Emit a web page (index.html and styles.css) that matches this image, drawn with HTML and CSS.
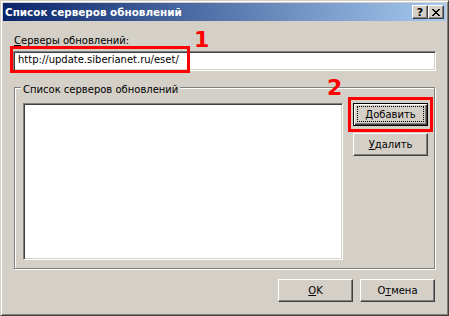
FILE: index.html
```html
<!DOCTYPE html>
<html>
<head>
  <title>Список серверов обновлений</title>
  <link rel="stylesheet" href="styles.css">
</head>
<body>
  <div class="window">
    <div class="titlebar">
      <span class="title">Список серверов обновлений</span>
      <div class="caption-buttons">
        <span class="cap-btn">?</span>
        <span class="cap-btn">
          <svg width="8" height="7" viewBox="0 0 8 7" shape-rendering="crispEdges">
            <path d="M0 0h2v1h-2z M6 0h2v1h-2z M1 1h2v1h-2z M5 1h2v1h-2z M2 2h4v1h-4z M3 3h2v1h-2z M2 4h4v1h-4z M1 5h2v1h-2z M5 5h2v1h-2z M0 6h2v1h-2z M6 6h2v1h-2z" fill="#000"/>
          </svg>
        </span>
      </div>
    </div>

    <div class="content">
      <div class="field-label"><u>С</u>ерверы обновлений:</div>
      <div class="edit">http://update.siberianet.ru/eset/</div>

      <div class="group">
        <span class="group-title">Список серверов обновлений</span>
        <div class="listbox"></div>
        <div class="group-buttons">
          <button class="btn default"><span class="focus"><u>Д</u>обавить</span></button>
          <button class="btn"><u>У</u>далить</button>
        </div>
      </div>

      <div class="footer">
        <button class="btn"><u>O</u>K</button>
        <button class="btn">О<u>т</u>мена</button>
      </div>
    </div>

    <!-- red annotations -->
    <div class="mark-box mark-box-1"></div>
    <div class="mark-box mark-box-2"></div>
    <span class="mark-num mark-num-1">1</span>
    <span class="mark-num mark-num-2">2</span>
  </div>
</body>
</html>
```

FILE: styles.css
```css
body {
  margin: 0;
  font-family: "DejaVu Sans", "Liberation Sans", sans-serif;
  font-size: 10px;
  line-height: 13px;
  color: #000;
}

.window {
  position: relative;
  width: 449px;
  height: 316px;
  box-sizing: border-box;
  display: flex;
  flex-direction: column;
  background: #d4d0c8;
  border: 1px solid;
  border-color: #d4d0c8 #404040 #404040 #d4d0c8;
  box-shadow: inset 1px 1px #fff, inset -1px -1px #808080;
  padding: 2px;
}

/* title bar */
.titlebar {
  height: 18px;
  display: flex;
  align-items: center;
  justify-content: space-between;
  padding: 0 2px;
  background: linear-gradient(to right, #0a246a, #a6caf0);
  color: #fff;
  font-weight: bold;
}

.title {
  font-size: 10.4px;
}

.caption-buttons {
  display: flex;
}

.cap-btn {
  width: 16px;
  height: 14px;
  box-sizing: border-box;
  display: flex;
  align-items: center;
  justify-content: center;
  background: #d4d0c8;
  border: 1px solid;
  border-color: #fff #404040 #404040 #fff;
  box-shadow: inset -1px -1px #808080;
  color: #000;
  font-size: 11px;
  font-weight: bold;
}

/* dialog body */
.content {
  flex: 1;
  display: flex;
  flex-direction: column;
  padding: 13px 10px 0 10px;
}

.field-label {
  padding-left: 1px;
}

.edit {
  margin-top: 4px;
  height: 20px;
  box-sizing: border-box;
  padding: 1px 4px;
  background: #fff;
  border: 1px solid;
  border-color: #808080 #fff #fff #808080;
  box-shadow: inset 1px 1px #404040, inset -1px -1px #d4d0c8;
  white-space: nowrap;
}

.group {
  position: relative;
  display: flex;
  gap: 10px;
  height: 182px;
  box-sizing: border-box;
  margin: 16px 1px 0 1px;
  padding: 15px 6px 8px 8px;
  border: 1px solid #808080;
  box-shadow: inset 1px 1px #fff, 1px 1px #fff;
}

.group-title {
  position: absolute;
  top: -5px;
  left: 6px;
  padding: 0 2px;
  background: #d4d0c8;
}

.listbox {
  width: 320px;
  height: 157px;
  box-sizing: border-box;
  background: #fff;
  border: 1px solid;
  border-color: #808080 #fff #fff #808080;
  box-shadow: inset 1px 1px #404040, inset -1px -1px #d4d0c8;
}

.group-buttons {
  display: flex;
  flex-direction: column;
  gap: 7px;
}

.btn {
  width: 75px;
  height: 23px;
  box-sizing: border-box;
  margin: 0;
  padding: 0;
  display: flex;
  align-items: center;
  justify-content: center;
  font: inherit;
  color: #000;
  background: #d4d0c8;
  border: 1px solid;
  border-color: #fff #404040 #404040 #fff;
  box-shadow: inset -1px -1px #808080;
}

.btn.default {
  align-items: stretch;
  padding: 2px 3px 3px 3px;
  border-color: #000;
  box-shadow: inset 1px 1px #fff, inset -1px -1px #404040, inset -2px -2px #808080;
}

.focus {
  flex: 1;
  display: flex;
  align-items: center;
  justify-content: center;
  border: 1px dotted #000;
}

.footer {
  display: flex;
  justify-content: flex-end;
  gap: 7px;
  margin-top: 10px;
  padding-right: 1px;
}

/* red marks drawn over the screenshot */
.mark-box {
  position: absolute;
  box-sizing: border-box;
  border: 3px solid #f00;
}

.mark-box-1 {
  left: 9px;
  top: 45px;
  width: 180px;
  height: 27px;
}

.mark-box-2 {
  left: 347px;
  top: 96px;
  width: 85px;
  height: 35px;
}

.mark-num {
  position: absolute;
  color: #f00;
  font-size: 22px;
  font-weight: bold;
  line-height: 22px;
}

.mark-num-1 {
  left: 193px;
  top: 28px;
}

.mark-num-2 {
  left: 326px;
  top: 76px;
}
```
